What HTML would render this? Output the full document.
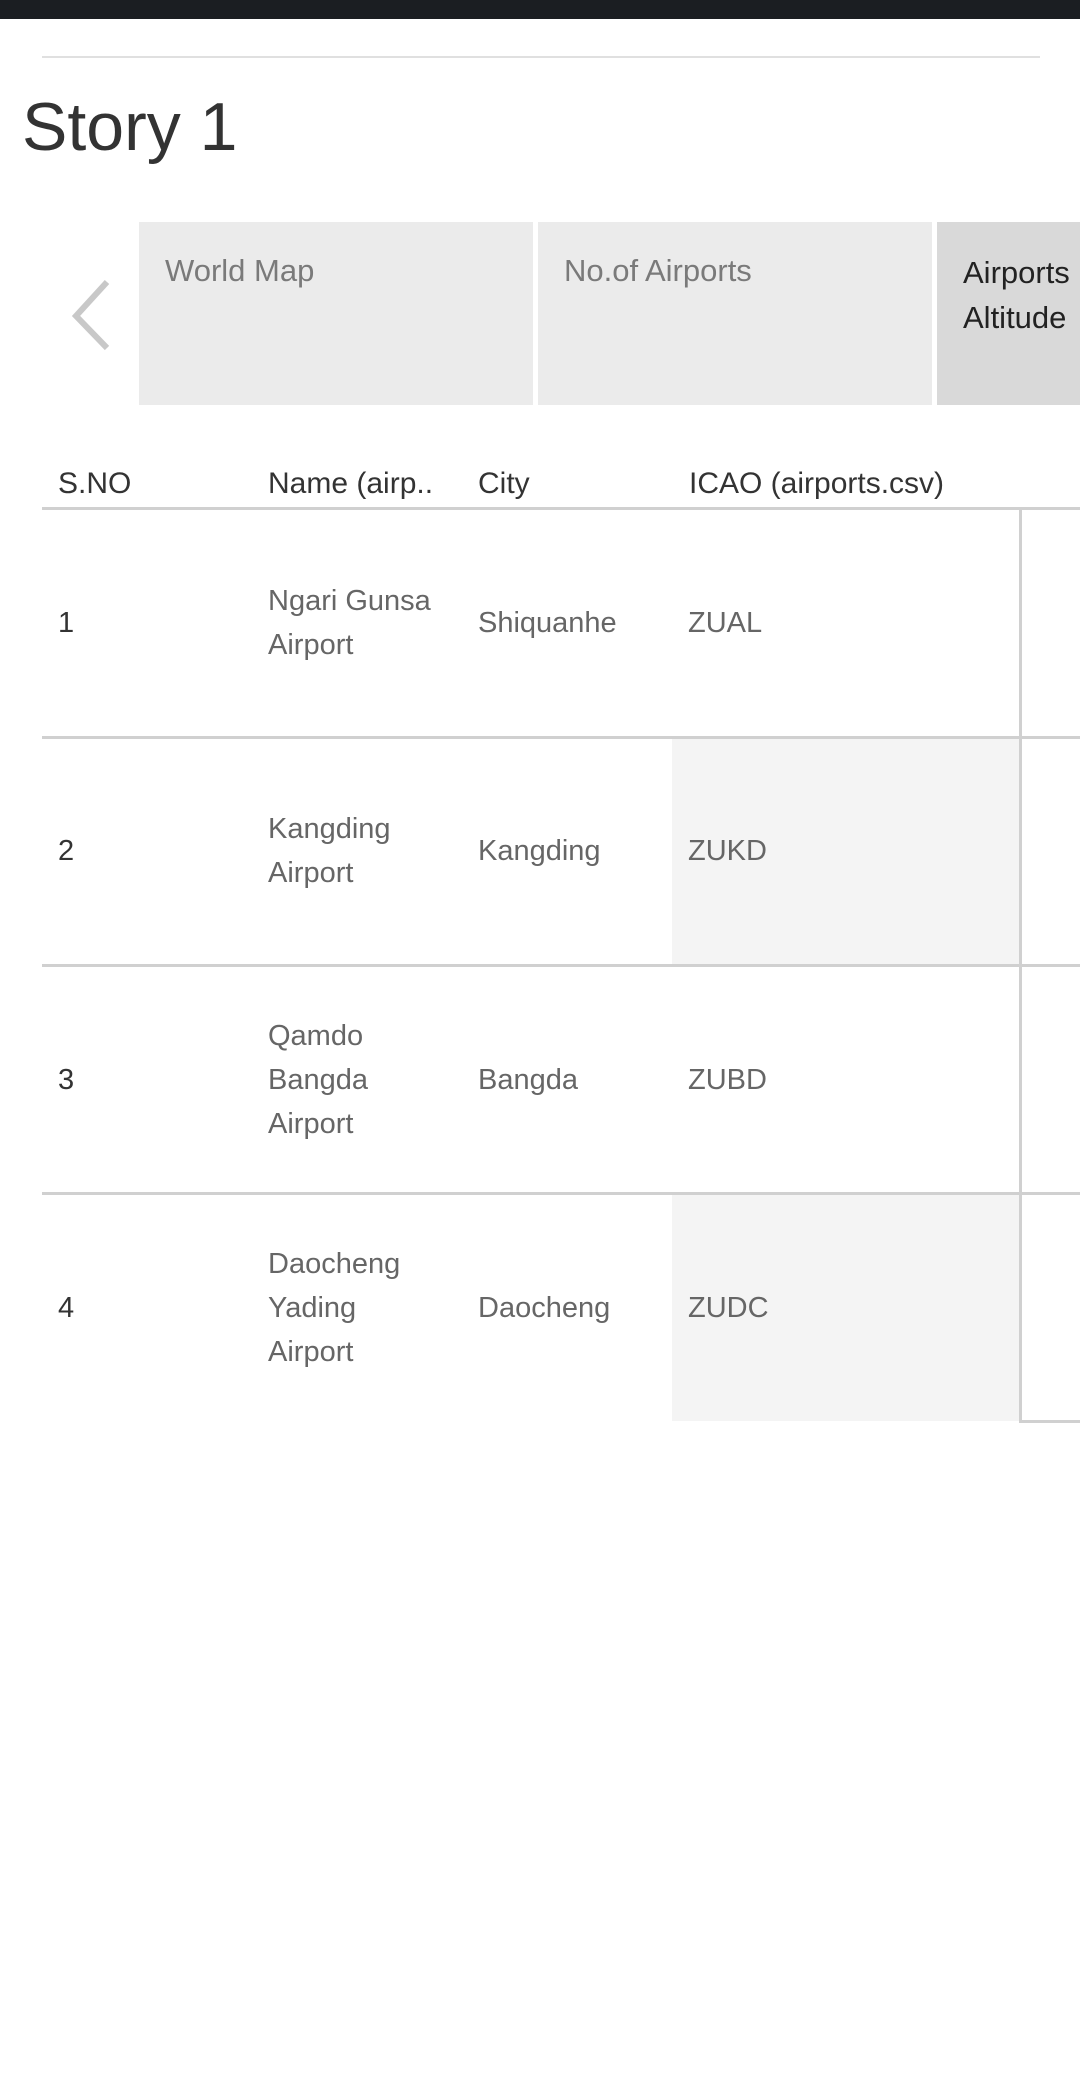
<!DOCTYPE html>
<html><head><meta charset="utf-8"><style>
html,body{margin:0;padding:0;width:1080px;height:2100px;background:#fff;overflow:hidden;position:relative;font-family:"Liberation Sans",sans-serif}
div{position:absolute}
.t{white-space:nowrap}
.h{font-size:30px;color:#333;top:467px}
.c{font-size:29px;color:#666;line-height:44px}
.n{font-size:29px;color:#333;line-height:44px}
.hl{height:3px;background:#d0d0d0;left:42px;width:1038px}
</style></head><body>
<div style="left:0;top:0;width:1080px;height:19px;background:#1b1e22"></div>
<div style="left:42px;top:56px;width:998px;height:2px;background:#e0e0e0"></div>
<div class="t" style="left:22px;top:88px;font-size:68px;color:#333">Story 1</div>

<svg style="position:absolute;left:66px;top:276px" width="50" height="80"><polyline points="41,6 10,40 41,72" fill="none" stroke="#c8c8c8" stroke-width="6"/></svg>
<div style="left:139px;top:222px;width:394px;height:183px;background:#ebebeb"></div>
<div style="left:538px;top:222px;width:394px;height:183px;background:#ebebeb"></div>
<div style="left:937px;top:222px;width:143px;height:183px;background:#d9d9d9"></div>
<div class="t" style="left:165px;top:253px;font-size:31px;color:#7a7a7a">World Map</div>
<div class="t" style="left:564px;top:253px;font-size:31px;color:#7a7a7a">No.of Airports</div>
<div class="t" style="left:963px;top:250px;font-size:31px;color:#222;line-height:45px">Airports<br>Altitude</div>

<div class="t h" style="left:58px">S.NO</div>
<div class="t h" style="left:268px">Name (airp..</div>
<div class="t h" style="left:478px">City</div>
<div class="t h" style="left:689px">ICAO (airports.csv)</div>

<div style="left:672px;top:738px;width:348px;height:228px;background:#f4f4f4"></div>
<div style="left:672px;top:1195px;width:348px;height:226px;background:#f4f4f4"></div>

<div class="hl" style="top:507px"></div>
<div class="hl" style="top:736px"></div>
<div class="hl" style="top:964px"></div>
<div class="hl" style="top:1192px"></div>
<div style="left:1020px;top:1420px;width:60px;height:3px;background:#d0d0d0"></div>
<div style="left:1019px;top:509px;width:3px;height:914px;background:#d0d0d0"></div>

<div class="t n" style="left:58px;top:601px">1</div>
<div class="t c" style="left:268px;top:579px">Ngari Gunsa<br>Airport</div>
<div class="t c" style="left:478px;top:601px">Shiquanhe</div>
<div class="t c" style="left:688px;top:601px">ZUAL</div>

<div class="t n" style="left:58px;top:829px">2</div>
<div class="t c" style="left:268px;top:807px">Kangding<br>Airport</div>
<div class="t c" style="left:478px;top:829px">Kangding</div>
<div class="t c" style="left:688px;top:829px">ZUKD</div>

<div class="t n" style="left:58px;top:1058px">3</div>
<div class="t c" style="left:268px;top:1014px">Qamdo<br>Bangda<br>Airport</div>
<div class="t c" style="left:478px;top:1058px">Bangda</div>
<div class="t c" style="left:688px;top:1058px">ZUBD</div>

<div class="t n" style="left:58px;top:1286px">4</div>
<div class="t c" style="left:268px;top:1242px">Daocheng<br>Yading<br>Airport</div>
<div class="t c" style="left:478px;top:1286px">Daocheng</div>
<div class="t c" style="left:688px;top:1286px">ZUDC</div>
</body></html>
